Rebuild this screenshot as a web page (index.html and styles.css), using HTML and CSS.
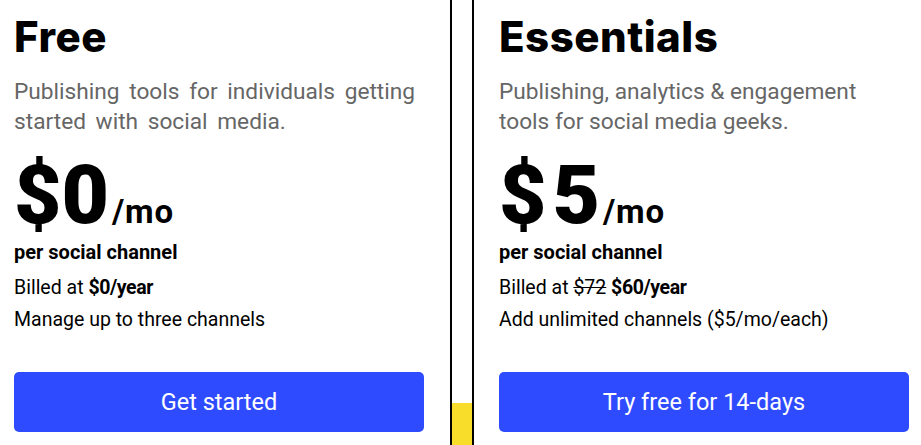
FILE: index.html
```html
<!DOCTYPE html>
<html>
<head>
<meta charset="utf-8">
<link rel="stylesheet" href="styles.css">
</head>
<body>
<div class="plans">
  <div class="backdrop">
    <svg class="swirl" width="60" height="50" viewBox="0 0 60 50"><path d="M4 48 C 8 30, 20 26, 40 40" fill="none" stroke="#fff6c4" stroke-width="2.5" opacity="0.8"/></svg>
  </div>
  <section class="card">
    <h2 class="title">Free</h2>
    <p class="desc desc-loose">Publishing tools for individuals getting started with social media.</p>
    <div class="price"><span class="amount"><span class="cur">$</span>0</span><span class="per">/mo</span></div>
    <p class="unit">per social channel</p>
    <p class="line billed">Billed at <strong>$0/year</strong></p>
    <p class="line">Manage up to three channels</p>
    <a class="btn" href="#">Get started</a>
  </section>
  <section class="card">
    <h2 class="title">Essentials</h2>
    <p class="desc">Publishing, analytics &amp; engagement tools for social media geeks.</p>
    <div class="price"><span class="amount"><span class="cur wide">$</span>5</span><span class="per">/mo</span></div>
    <p class="unit">per social channel</p>
    <p class="line billed">Billed at <s>$72</s> <strong>$60/year</strong></p>
    <p class="line">Add unlimited channels ($5/mo/each)</p>
    <a class="btn" href="#">Try free for 14-days</a>
  </section>
</div>
</body>
</html>
```
FILE: styles.css
```css
html, body {
  margin: 0;
  padding: 0;
  background: #fff;
  overflow: hidden;
}
body {
  font-family: Roboto, "Liberation Sans", sans-serif;
  color: #000;
}
.plans {
  position: relative;
  display: flex;
  gap: 20px;
  margin-left: -13px;
  height: 445px;
}
.backdrop {
  position: absolute;
  left: 0;
  right: -40px;
  top: 403px;
  bottom: 0;
  background: #f9dd2b;
  z-index: 0;
}
.swirl {
  position: absolute;
  left: 463px;
  top: 12px;
}
.card {
  position: relative;
  z-index: 1;
  background: #fff;
  border-left: 2px solid #000;
  border-right: 2px solid #000;
  padding: 0 26px 0 25px;
  width: 410px;
  flex: none;
  display: flex;
  flex-direction: column;
}
.title {
  font-family: Inter, "Noto Sans", sans-serif;
  font-weight: 800;
  font-size: 42px;
  letter-spacing: 0.5px;
  line-height: 52px;
  margin: 11px 0 0;
}
.desc {
  font-size: 22.7px;
  line-height: 30px;
  color: #666;
  margin: 14px 0 0;
}
.desc-loose {
  word-spacing: 4px;
  margin-right: -30px;
}
.price {
  display: flex;
  align-items: baseline;
  margin-top: 13px;
  height: 90px;
}
.amount {
  font-size: 82px;
  font-weight: 900;
  line-height: 90px;
}
.cur.wide {
  margin-right: 6px;
}
.per {
  font-size: 33px;
  font-weight: 700;
  letter-spacing: 0.8px;
  margin-left: 3px;
}
.unit {
  font-size: 20px;
  font-weight: 700;
  margin: 0;
  line-height: 24px;
}
.line {
  font-size: 19.5px;
  line-height: 24px;
  margin: 8px 0 0;
  color: #000;
}
.line.billed {
  margin-top: 12px;
}
.line strong {
  font-weight: 700;
  letter-spacing: -0.4px;
}
.btn {
  display: flex;
  align-items: center;
  justify-content: center;
  margin-top: 40px;
  height: 60px;
  background: #2f4bff;
  border-radius: 5px;
  color: #fff;
  text-decoration: none;
  font-size: 23.5px;
}
```
